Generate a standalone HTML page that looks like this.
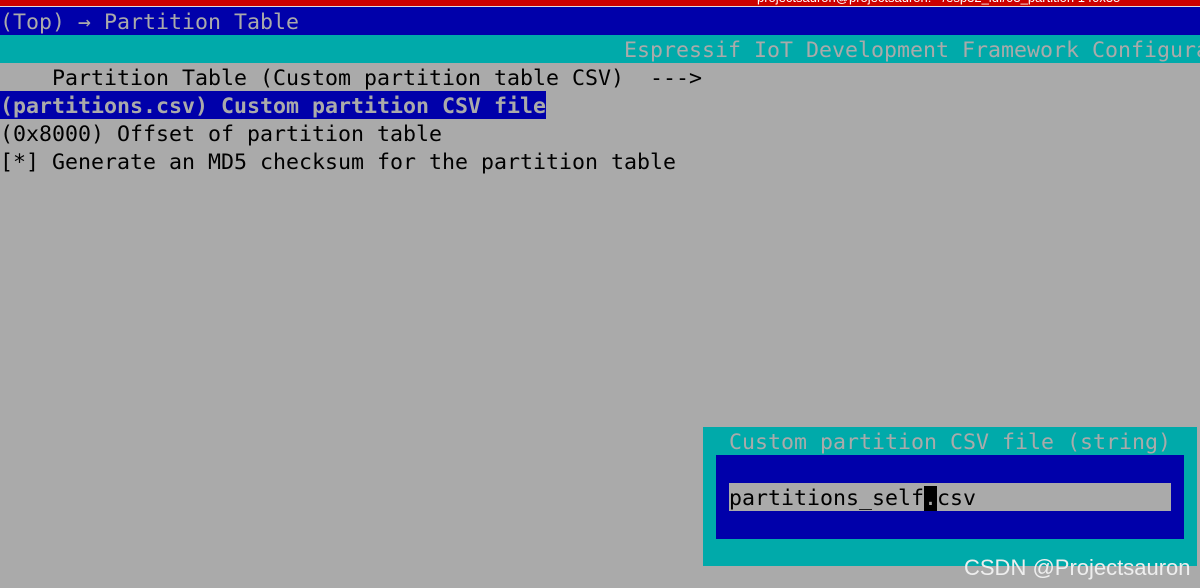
<!DOCTYPE html>
<html><head><meta charset="utf-8"><style>
body{margin:0;width:1200px;height:588px;overflow:hidden;background:#aaaaaa;position:relative;font-family:"DejaVu Sans Mono","Liberation Mono",monospace;font-size:21.6px;}
.r{position:absolute;left:0;height:28px;line-height:32px;white-space:pre;overflow:hidden}
.red{position:absolute;left:0;top:0;width:1200px;height:6px;background:#cc0000;overflow:hidden;border-bottom:1px solid #ddd}
.red span{position:absolute;left:757px;top:-10px;font:13px "Liberation Sans",sans-serif;color:#fff;white-space:pre}
</style></head><body>
<div class="red"><span>projectsauron@projectsauron: ~/esp32_idf/03_partition 140x35</span></div>
<div class="r" style="top:7px;width:1200px;background:#0000aa;color:#aaaaaa">(Top) <span style="display:inline-block;width:26px">→</span>Partition Table</div>
<div class="r" style="top:35px;width:1200px;background:#00aaaa;color:#aaaaaa;overflow:hidden"><span style="position:absolute;left:624px">Espressif IoT Development Framework Configuration</span></div>
<div class="r" style="top:63px;color:#000">    Partition Table (Custom partition table CSV)  ---&gt;</div>
<div class="r" style="top:91px;color:#aaaaaa;background:#0000aa;font-weight:bold">(partitions.csv) Custom partition CSV file</div>
<div class="r" style="top:119px;color:#000">(0x8000) Offset of partition table</div>
<div class="r" style="top:147px;color:#000">[*] Generate an MD5 checksum for the partition table</div>
<div style="position:absolute;left:703px;top:427px;width:494px;height:139px;background:#00aaaa"></div>
<div class="r" style="left:729px;top:427px;color:#aaaaaa">Custom partition CSV file (string)</div>
<div style="position:absolute;left:716px;top:455px;width:468px;height:84px;background:#0000aa"></div>
<div style="position:absolute;left:729px;top:483px;width:442px;height:28px;background:#aaaaaa"></div>
<div class="r" style="left:729px;top:483px;color:#000">partitions_self<span style="background:#000;color:#aaa">.</span>csv</div>
<div style="position:absolute;left:964px;top:555px;font:22px 'Liberation Sans',sans-serif;color:#eeeeee;line-height:26px">CSDN @Projectsauron</div>
</body></html>
